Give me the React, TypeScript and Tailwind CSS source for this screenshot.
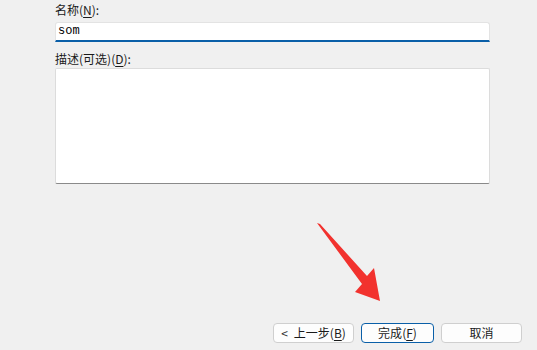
import React from "react";

const font = { fontFamily: '"Noto Sans CJK SC", "Liberation Sans", sans-serif' };

const Key = ({ k }: { k: string }) => (
  <>
    (<span className="underline underline-offset-2">{k}</span>)
  </>
);

const App = () => {
  return (
    <div
      className="relative w-[537px] h-[350px] bg-[#f0f0f0] text-[12px] text-[#1a1a1a] overflow-hidden flex flex-col"
      style={font}
    >
      <div className="pl-[55px] pr-[47px] flex flex-col">
        <div className="h-[22px] leading-[20px] pt-0">
          名称<Key k="N" />:
        </div>
        <div className="h-[20px] bg-white border border-[#e3e3e3] border-b-2 border-b-[#0a5fa8] rounded-t-[3px] flex items-center pl-[2px] pb-[1px]">
          <span className="text-[12px] text-black" style={{ fontFamily: '"Liberation Mono", monospace' }}>
            som
          </span>
        </div>
        <div className="h-[26px] leading-[20px] pt-[7px] mt-[0px]">
          描述(可选)<Key k="D" />:
        </div>
        <div className="mt-[0px] h-[116px] w-[435px] bg-white border border-[#dcdcdc] border-b-[#8a8a8a] rounded-[2px]" />
      </div>

      <div className="mt-auto mb-[7px] flex justify-end gap-[7px] pr-[15px]">
        <button className="w-[81px] h-[20px] rounded-[4px] border border-[#cfcfcf] bg-[#fdfdfd] flex items-center justify-center gap-[6px] text-[12px]">
          <span className="text-[#333]">&lt;</span>
          <span>
            上一步<Key k="B" />
          </span>
        </button>
        <button className="w-[73px] h-[20px] rounded-[4px] border border-[#0a5fa8] bg-[#fdfdfd] flex items-center justify-center text-[12px]">
          完成<Key k="F" />
        </button>
        <button className="w-[81px] h-[20px] rounded-[4px] border border-[#cfcfcf] bg-[#fdfdfd] flex items-center justify-center text-[12px]">
          取消
        </button>
      </div>

      <svg className="absolute left-0 top-0" width="537" height="350" viewBox="0 0 537 350">
        <polygon
          points="317,223 320,224 367,276 374,268 380,301 355,292 362,284"
          fill="#f2322e"
        />
      </svg>
    </div>
  );
};

export default App;
